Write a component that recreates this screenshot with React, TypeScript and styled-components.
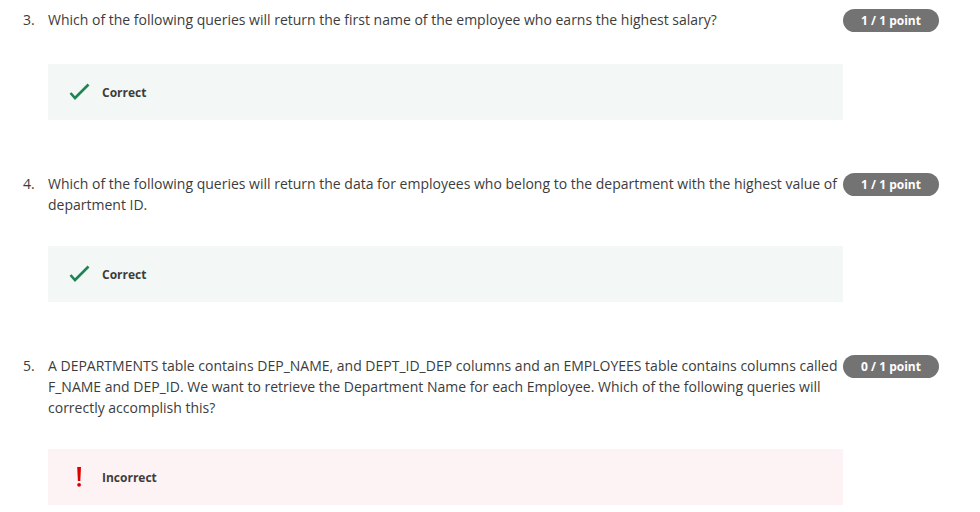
import styled, { createGlobalStyle } from "styled-components";

const GlobalStyle = createGlobalStyle`
    body {
        margin: 0;
        background: #ffffff;
        font-family: "Open Sans", "Liberation Sans", sans-serif;
        color: #373a3c;
    }
`;

const Page = styled.div`
    padding: 9px 0 0 23px;
    display: flex;
    flex-direction: column;
    gap: 53px;
`;

const Question = styled.div`
    display: grid;
    grid-template-columns: 25px 795px 96px;
    row-gap: 31px;
    align-items: start;
`;

const Num = styled.div`
    font-size: 14px;
    line-height: 21px;
    color: #3c3c3c;
`;

const Prompt = styled.div`
    font-size: 14px;
    line-height: 21px;
    color: #3c3c3c;
    padding-right: 4px;
`;

const Badge = styled.div`
    height: 23px;
    margin-bottom: 1px;
    border-radius: 12px;
    background: #737373;
    color: #ffffff;
    font-size: 12px;
    font-weight: 700;
    display: flex;
    align-items: center;
    justify-content: center;
`;

const Feedback = styled.div<{ $ok: boolean }>`
    grid-column: 2;
    height: 56px;
    background: ${(p) => (p.$ok ? "#f3f8f6" : "#fdf2f4")};
    display: flex;
    align-items: center;
    padding-left: 21px;
    gap: 12px;
`;

const IconBox = styled.div`
    width: 21px;
    height: 20px;
    display: flex;
    align-items: center;
    justify-content: center;
`;

const Label = styled.span`
    font-size: 12px;
    font-weight: 700;
    color: #3d3d3d;
`;

function Check() {
    return (
        <svg width="21" height="18" viewBox="0 0 21 18">
            <polyline points="1.5,10 6,15 19.5,1.5" fill="none" stroke="#1f8354" strokeWidth="2.6" />
        </svg>
    );
}

function Bang() {
    return (
        <svg width="21" height="22" viewBox="0 0 21 22">
            <path d="M8.2 1 H12 L11.3 15 H8.9 Z" fill="#dd0000" />
            <circle cx="10.1" cy="18.8" r="1.9" fill="#dd0000" />
        </svg>
    );
}

const questions = [
    {
        n: "3.",
        text: "Which of the following queries will return the first name of the employee who earns the highest salary?",
        score: "1 / 1 point",
        ok: true,
    },
    {
        n: "4.",
        text: "Which of the following queries will return the data for employees who belong to the department with the highest value of department ID.",
        score: "1 / 1 point",
        ok: true,
    },
    {
        n: "5.",
        text: "A DEPARTMENTS table contains DEP_NAME, and DEPT_ID_DEP columns and an EMPLOYEES table contains columns called F_NAME and DEP_ID. We want to retrieve the Department Name for each Employee. Which of the following queries will correctly accomplish this?",
        score: "0 / 1 point",
        ok: false,
    },
];

export default function App() {
    return (
        <>
            <GlobalStyle />
            <Page>
                {questions.map((q) => (
                    <Question key={q.n}>
                        <Num>{q.n}</Num>
                        <Prompt>{q.text}</Prompt>
                        <Badge>{q.score}</Badge>
                        <Feedback $ok={q.ok}>
                            <IconBox>{q.ok ? <Check /> : <Bang />}</IconBox>
                            <Label>{q.ok ? "Correct" : "Incorrect"}</Label>
                        </Feedback>
                    </Question>
                ))}
            </Page>
        </>
    );
}
